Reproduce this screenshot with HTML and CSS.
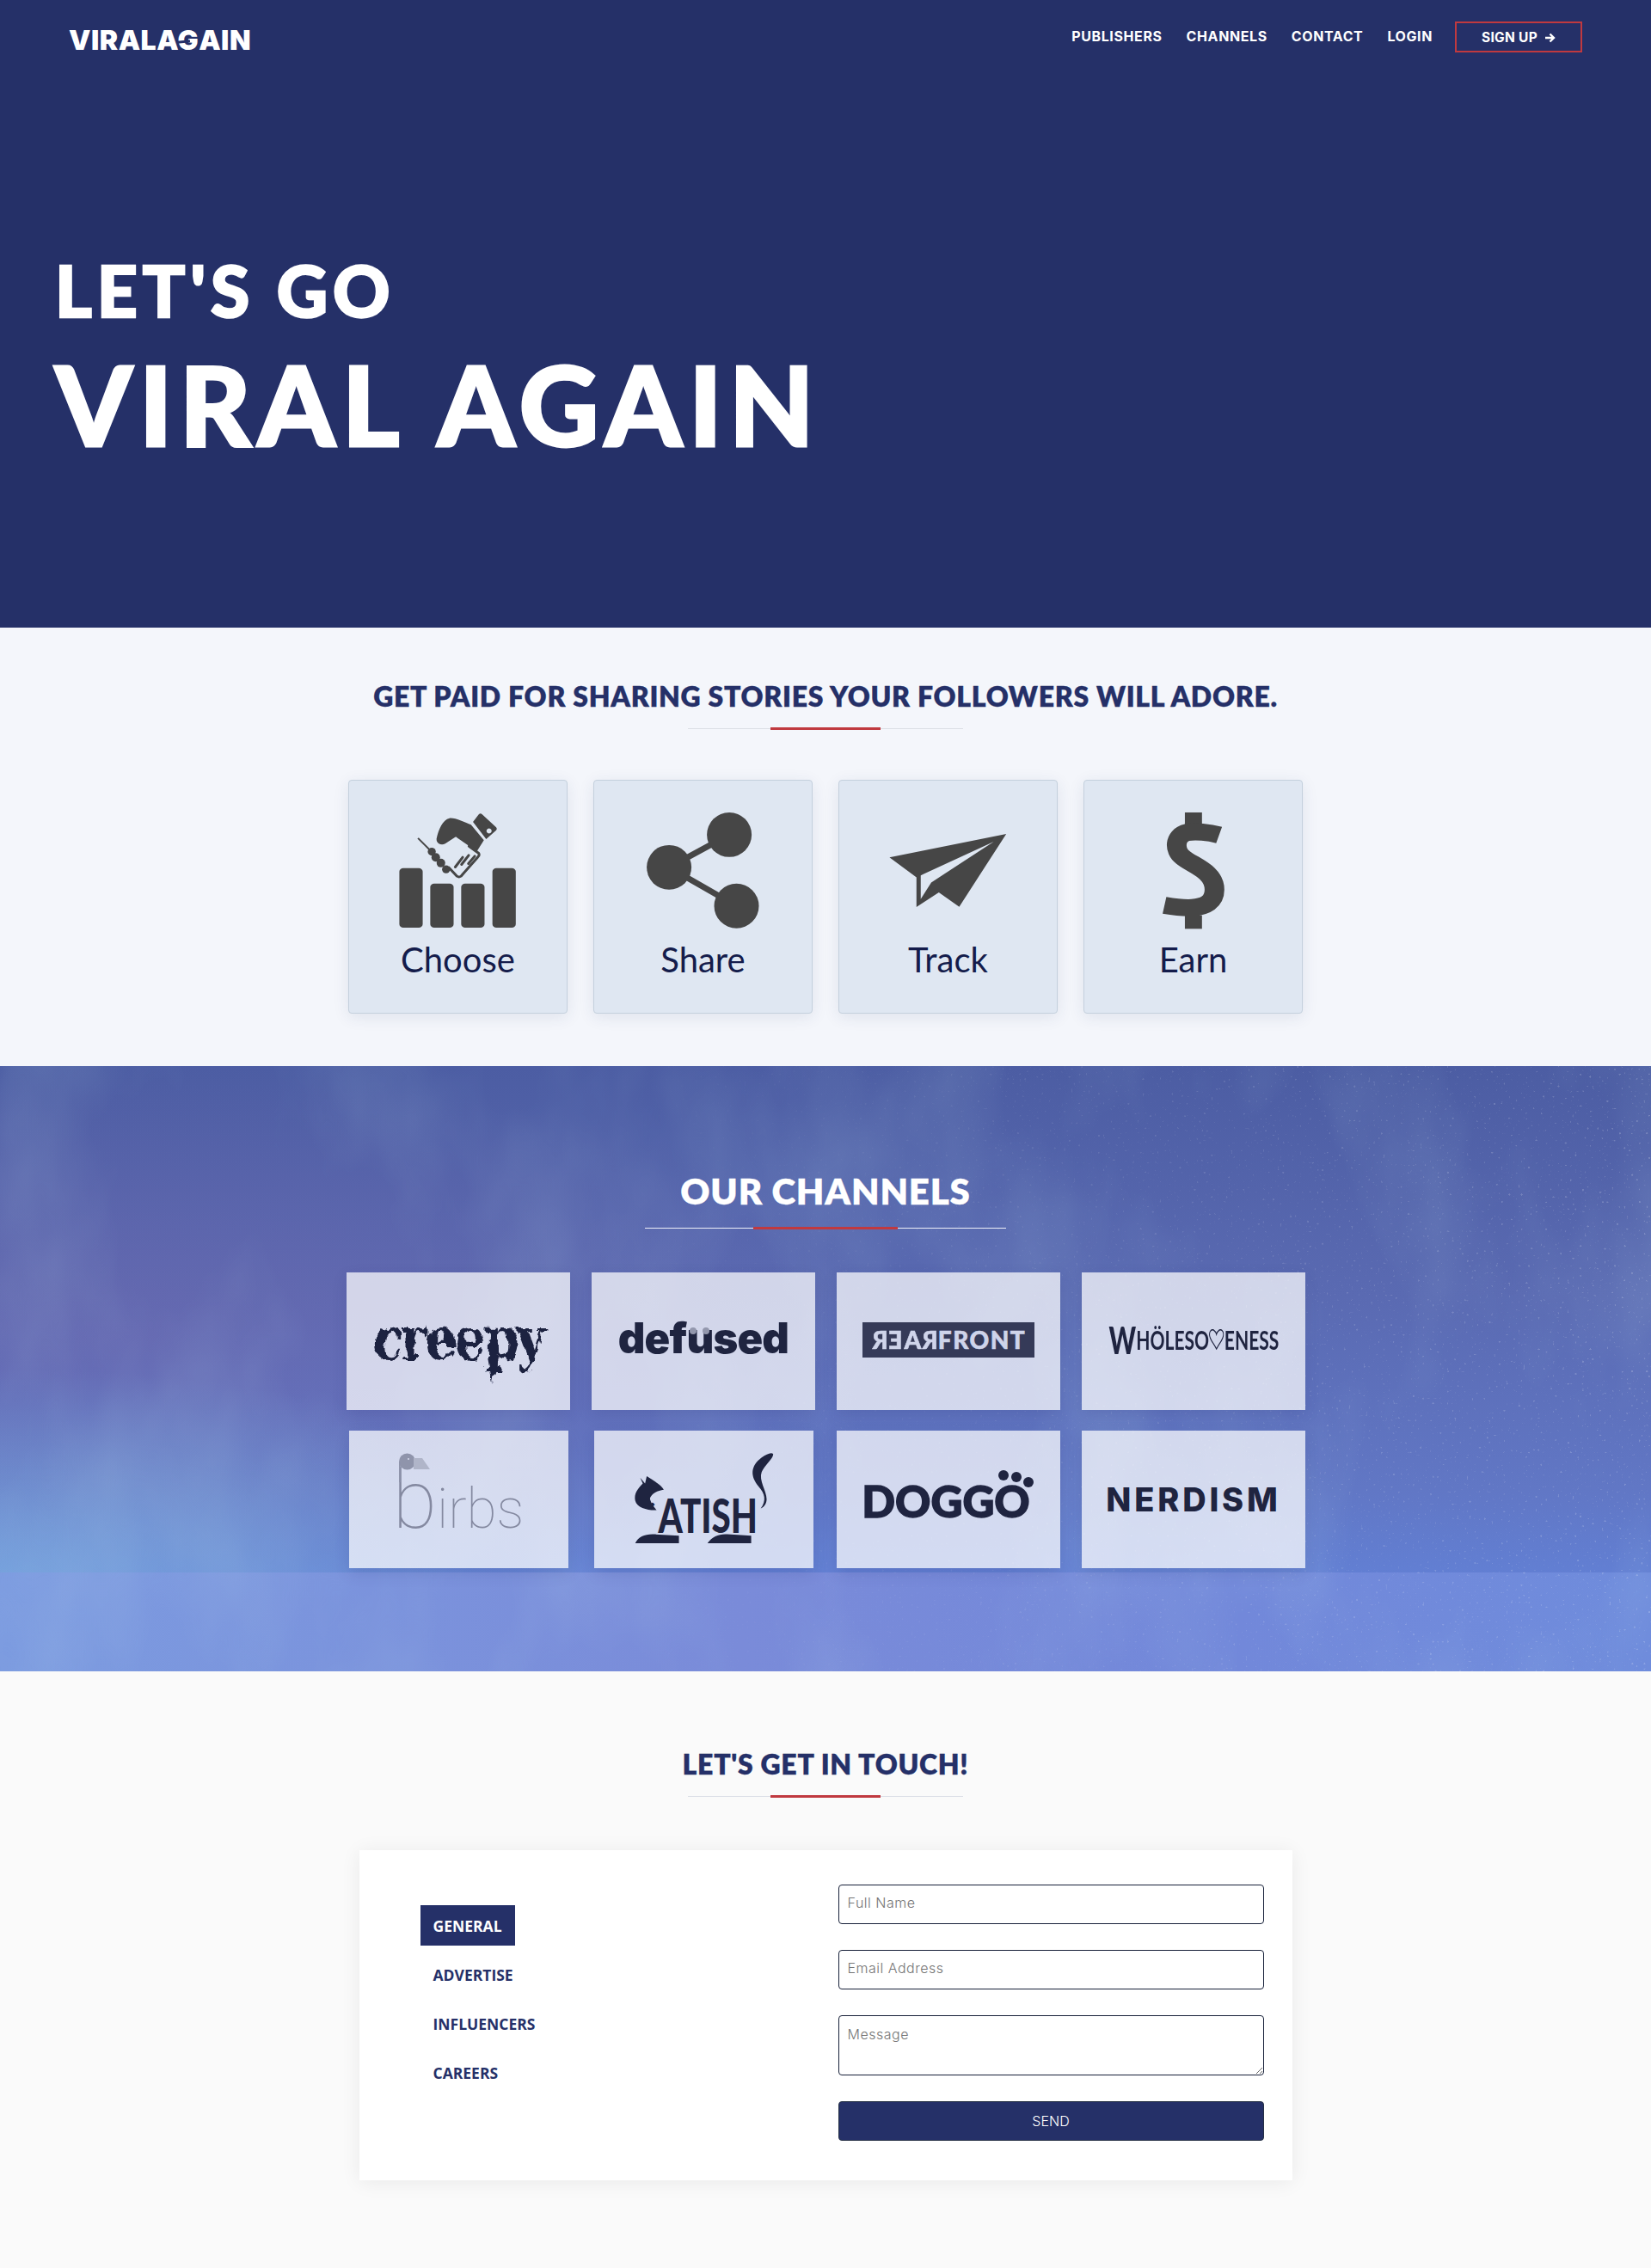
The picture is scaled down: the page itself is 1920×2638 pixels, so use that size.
FILE: index.html
```html
<!DOCTYPE html>
<html lang="en">
<head>
  <meta charset="utf-8">
  <title>Viral Again</title>
  <link rel="stylesheet" href="styles.css">
</head>
<body>
  <svg class="defs" width="0" height="0" aria-hidden="true">
    <filter id="rough" x="-5%" y="-5%" width="110%" height="110%">
      <feTurbulence type="fractalNoise" baseFrequency="0.09" numOctaves="3" seed="4"/>
      <feDisplacementMap in="SourceGraphic" scale="9"/>
    </filter>
  </svg>

  <section class="hero">
    <header class="topbar">
      <a class="brand">VIRALA<span class="brand-g">G</span>AIN</a>
      <nav class="nav">
        <a>PUBLISHERS</a>
        <a>CHANNELS</a>
        <a>CONTACT</a>
        <a>LOGIN</a>
        <a class="signup">SIGN UP
          <svg width="13" height="12" viewBox="0 0 13 12"><path d="M1 6h10M6.500 1.500 11 6l-4.500 4.500" fill="none" stroke="#fff" stroke-width="2.400"/></svg>
        </a>
      </nav>
    </header>
    <h1 class="hero-title">
      <span class="hero-small">LET'S GO</span>
      <span class="hero-big">VIRAL AGAIN</span>
    </h1>
  </section>

  <section class="steps">
    <h2 class="title">GET PAID FOR SHARING STORIES YOUR FOLLOWERS WILL ADORE.</h2>
    <div class="rule"></div>
    <div class="step-row">
      <div class="step">
        <svg class="step-icon" viewBox="200 540 400 430" preserveAspectRatio="none">
          <rect x="222" y="750" width="71" height="208" rx="12" ry="12"/>
          <rect x="316" y="804" width="71" height="154" rx="12" ry="12"/>
          <rect x="410" y="804" width="71" height="154" rx="12" ry="12"/>
          <rect x="505" y="750" width="71" height="208" rx="12" ry="12"/>
          <g transform="translate(261.300 540) scale(.871 1)">
            <path d="M85,105C90,80 105,40 130,35C150,33 185,50 205,58L250,112L225,152C205,137 172,114 152,100L115,124C100,132 82,122 85,105Z"/>
            <path fill-rule="evenodd" d="M232,22Q238,16 244,22L292,66Q298,72 292,78L258,108L212,48ZM268,71a9,9 0 1,0 .1,0Z"/>
            <path class="hand-line" d="M198,133L232,158Q236,165 228,172L170,238Q163,243 156,238L128,208"/>
            <path class="hand-line" d="M218,168L196,194M197,165L172,197M176,172L150,206"/>
            <path class="hand-rod" d="M20,105L70,155"/>
            <circle cx="68" cy="152" r="14"/><circle cx="82" cy="172" r="15"/><circle cx="100" cy="192" r="15"/><circle cx="118" cy="214" r="14"/>
          </g>
        </svg>
        <span class="step-label">Choose</span>
      </div>
      <div class="step">
        <svg class="step-icon" viewBox="943 540 400 430" preserveAspectRatio="none">
          <path class="link" d="M1223,633L1040,747L1245,882"/>
          <ellipse cx="1223" cy="633" rx="68" ry="78"/>
          <ellipse cx="1040" cy="747" rx="68" ry="78"/>
          <ellipse cx="1245" cy="882" rx="68" ry="78"/>
        </svg>
        <span class="step-label">Share</span>
      </div>
      <div class="step">
        <svg class="step-icon" viewBox="198 540 400 430" preserveAspectRatio="none">
          <path fill-rule="evenodd" d="M220,712L575,630L432,885L370,835L302,886L302,782ZM537,657L315,775L315,858L347,800Z"/>
        </svg>
        <span class="step-label">Track</span>
      </div>
      <div class="step">
        <svg class="step-icon" viewBox="943 540 400 430" preserveAspectRatio="none">
          <rect x="1118" y="555" width="52" height="50"/>
          <rect x="1118" y="915" width="52" height="47"/>
          <path class="dollar" d="M1222,634C1190,624 1150,620 1125,625C1085,635 1085,690 1112,712C1140,740 1208,760 1208,825C1208,868 1180,885 1140,888C1110,890 1082,885 1056,880"/>
        </svg>
        <span class="step-label">Earn</span>
      </div>
    </div>
  </section>

  <section class="channels">
    <svg class="nebula" width="1920" height="704" aria-hidden="true">
      <defs>
        <filter id="clouds" x="0" y="0" width="100%" height="100%">
          <feTurbulence type="fractalNoise" baseFrequency="0.006 0.003" numOctaves="4" seed="11"/>
          <feColorMatrix values="0 0 0 0 .5  0 0 0 0 .72  0 0 0 0 .85  2.400 0 0 0 -1.050"/>
        </filter>
        <filter id="stars" x="0" y="0" width="100%" height="100%">
          <feTurbulence type="fractalNoise" baseFrequency="0.35" numOctaves="1" seed="7"/>
          <feColorMatrix values="0 0 0 0 1  0 0 0 0 1  0 0 0 0 1  12 0 0 0 -8.100"/>
          <feGaussianBlur stdDeviation="0.600"/>
        </filter>
        <linearGradient id="starfade" x1="0" x2="1" y1="0" y2="0">
          <stop offset="0.35" stop-color="#000"/>
          <stop offset="1" stop-color="#fff"/>
        </linearGradient>
        <mask id="starmask"><rect width="1920" height="704" fill="url(#starfade)"/></mask>
      </defs>
      <rect width="1920" height="704" filter="url(#clouds)" opacity="0.14"/>
      <g mask="url(#starmask)"><rect width="1920" height="704" filter="url(#stars)" opacity="0.2"/></g>
    </svg>
    <div class="channels-body">
      <h2 class="title title-light">OUR CHANNELS</h2>
      <div class="rule rule-light"></div>
      <div class="tile-grid">
        <div class="tile"><span class="logo-creepy">creepy</span></div>
        <div class="tile"><span class="logo-defused">def<span class="dotted-u">u</span>sed</span></div>
        <div class="tile"><span class="logo-rear"><span class="mirror">R</span><span class="mirror">E</span><span class="mirror">A</span><span class="mirror">R</span>FRONT</span></div>
        <div class="tile"><span class="logo-whole"><b>W</b>HÖLESO<svg width="26" height="24" viewBox="0 0 26 24"><path d="M13,23C7,15 1,12 1,6C1,2 5,0 8,1C10,2 12,3 13,6C14,3 16,2 18,1C21,0 25,2 25,6C25,12 19,15 13,23Z" fill="none" stroke="#1f2440" stroke-width="1.500"/></svg>ENESS</span></div>
        <div class="tile tile-narrow">
          <span class="logo-birbs">
            <svg class="birb-head" width="40" height="34" viewBox="0 0 40 34">
              <circle cx="9.500" cy="10" r="9.500" fill="#8f94ab"/>
              <path d="M0,10V34H1.800V10Z" fill="#8f94ab"/>
              <path d="M17,6H27L36,19H17Z" fill="#b0b5c9"/>
              <circle cx="11" cy="7" r="1" fill="#d8dcee"/>
            </svg>
            <span class="birb-b">b</span>irbs
          </span>
        </div>
        <div class="tile tile-narrow">
          <svg class="logo-catish" viewBox="930 75 445 335" preserveAspectRatio="none">
            <text transform="translate(952 276) scale(.8 1)" class="cat-c">C</text>
            <path d="M960,170L975,190L980,165C1000,180 1025,195 1032,212C1010,215 990,230 990,245C995,265 1005,275 1010,283C985,285 950,275 945,250C940,225 955,205 968,190Z"/>
            <path d="M1327,277C1345,250 1340,225 1320,200C1295,165 1295,130 1330,100C1345,88 1360,80 1365,88C1365,105 1340,125 1330,150C1320,180 1345,215 1345,245C1345,262 1335,275 1327,277Z"/>
            <path d="M945,398C955,375 975,365 1005,367L1078,372V398ZM1165,398C1180,375 1200,365 1225,367L1298,372V398Z"/>
            <text transform="translate(1015 362) scale(.64 1)">ATISH</text>
          </svg>
        </div>
        <div class="tile">
          <span class="logo-doggo">DOGG<span class="paw-o">O</span></span>
        </div>
        <div class="tile"><span class="logo-nerdism">NERDISM</span></div>
      </div>
    </div>
  </section>

  <section class="contact">
    <h2 class="title">LET'S GET IN TOUCH!</h2>
    <div class="rule"></div>
    <div class="contact-card">
      <ul class="tabs">
        <li class="tab tab-active">GENERAL</li>
        <li class="tab">ADVERTISE</li>
        <li class="tab">INFLUENCERS</li>
        <li class="tab">CAREERS</li>
      </ul>
      <form class="contact-form">
        <input class="field" type="text" placeholder="Full Name">
        <input class="field" type="text" placeholder="Email Address">
        <textarea class="field field-area" placeholder="Message"></textarea>
        <button class="send" type="button">SEND</button>
      </form>
    </div>
  </section>
</body>
</html>
```

FILE: styles.css
```css
* { box-sizing: border-box; }
html, body { margin: 0; padding: 0; }
body { font-family: "Lato", "Open Sans", sans-serif; background: #fafafa; }
.defs { display: block; height: 0; }

/* hero */
.hero { height: 730px; background: #253068; color: #fff; }
.topbar { display: flex; justify-content: space-between; padding: 25px 80px 0; }
.brand { font-family: "Inter", sans-serif; font-weight: 900; font-size: 32px; line-height: 44px; letter-spacing: 0.5px; }
.brand-g { position: relative; }
.brand-g::after { content: ""; position: absolute; left: -1px; top: 20px; width: 15px; height: 3px; background: #253068; transform: rotate(-5deg); }
.nav { display: flex; align-items: flex-start; gap: 28px; font-family: "Inter", sans-serif; font-weight: 700; font-size: 16px; line-height: 34px; letter-spacing: 0.6px; }
.signup { display: flex; align-items: center; justify-content: center; gap: 8px; width: 148px; height: 36px; margin-left: -2px; border: 2px solid #c0393f; padding-top: 2px; line-height: 20px; font-size: 15.500px; letter-spacing: 0.3px; }
.hero-title { margin: 0; padding: 222px 0 0 64px; font-weight: 900; }
.hero-small { display: block; font-size: 82px; line-height: 92px; letter-spacing: 6px; -webkit-text-stroke: 2.500px #fff; }
.hero-big { display: block; font-size: 128px; line-height: 150px; margin-top: 12px; letter-spacing: 8px; word-spacing: 6px; -webkit-text-stroke: 3px #fff; }

/* section headings */
.title { margin: 0; text-align: center; color: #253068; font-weight: 800; font-size: 32px; line-height: 40px; letter-spacing: 0.7px; -webkit-text-stroke: 0.3px; }
.title-light { color: #fff; font-size: 42px; line-height: 50px; letter-spacing: 0.8px; }
.rule { width: 320px; height: 3px; margin: 16px auto 0; background: linear-gradient(#c0393f, #c0393f) center / 128px 3px no-repeat, linear-gradient(#dcdfe6, #dcdfe6) center / 100% 1px no-repeat; }
.rule-light { width: 420px; margin-top: 17px; background: linear-gradient(#c0393f, #c0393f) center / 168px 3px no-repeat, linear-gradient(#eef0f8, #eef0f8) center / 100% 1px no-repeat; }

/* how it works */
.steps { height: 510px; padding-top: 60px; background: #f4f6fb; }
.step-row { display: flex; justify-content: center; gap: 30px; margin-top: 58px; }
.step { display: flex; flex-direction: column; align-items: center; width: 255px; height: 272px; padding-top: 32px; background: #dfe7f2; border: 1px solid #c4d0dd; border-radius: 4px; box-shadow: 0 4px 18px rgba(40, 60, 110, 0.1); }
.step-icon { width: 153px; height: 143px; fill: #464646; }
.step-label { margin-top: 10px; font-size: 40px; line-height: 46px; color: #141c4b; }
.hand-line { fill: none; stroke: #464646; stroke-width: 9; stroke-linecap: round; stroke-linejoin: round; }
.hand-rod { fill: none; stroke: #464646; stroke-width: 6; }
.link { fill: none; stroke: #464646; stroke-width: 20; }
.dollar { fill: none; stroke: #464646; stroke-width: 60; }

/* channels */
.channels {
  position: relative;
  height: 704px;
  padding-top: 120px;
  background:
    linear-gradient(90deg, #7c9be0 0%, #7a8bd9 45%, #7288da 75%, #6f8cdc 100%) bottom / 100% 115px no-repeat,
    radial-gradient(700px 240px at 0% 84%, rgba(125, 175, 225, 0.7), transparent),
    radial-gradient(900px 320px at 8% 45%, rgba(125, 100, 170, 0.3), transparent),
    linear-gradient(180deg, #4c5da3 0%, #5a6ab2 38%, #6177c5 70%, #627fd3 84%);
}
.nebula { position: absolute; left: 0; top: 0; }
.channels-body { position: relative; }
.tile-grid { display: grid; grid-template-columns: repeat(4, 260px); justify-content: center; gap: 24px 25px; margin-top: 50px; padding-left: 1px; }
.tile { display: flex; align-items: center; justify-content: center; height: 160px; background: rgba(255, 255, 255, 0.72); box-shadow: 0 6px 16px rgba(40, 50, 110, 0.14); color: #1f2440; }
.tile-narrow { width: 255px; justify-self: center; }

.logo-creepy { position: relative; display: inline-block; font-family: "DejaVu Serif", serif; font-weight: 700; font-size: 58px; letter-spacing: -2.500px; line-height: 60px; filter: url(#rough); transform: scaleY(1.2); margin-bottom: 6px; }
.logo-creepy::after { content: ""; position: absolute; left: 133px; top: 46px; width: 14px; height: 28px; background: #1f2440; clip-path: polygon(0 0, 100% 0, 45% 100%); }
.logo-defused { font-family: "Inter", sans-serif; font-weight: 900; font-size: 49px; line-height: 60px; letter-spacing: -0.8px; margin-bottom: 6px; }
.dotted-u { position: relative; }
.dotted-u::before, .dotted-u::after { content: ""; position: absolute; top: 17px; width: 8px; height: 8px; border-radius: 50%; background: #9397ad; }
.dotted-u::before { left: 4px; }
.dotted-u::after { right: 4px; }
.logo-rear { display: flex; align-items: center; justify-content: center; width: 200px; height: 41px; margin-bottom: 4px; background: #353a58; color: #cfd4ea; font-weight: 900; font-size: 28px; letter-spacing: 1.500px; -webkit-text-stroke: 0.6px #cfd4ea; }
.mirror { display: inline-block; transform: scaleX(-1); }
.logo-whole { display: flex; align-items: center; transform: scaleX(0.68); white-space: nowrap; font-weight: 700; font-size: 31px; margin-bottom: 4px; }
.logo-whole b { font-size: 44px; }
.logo-birbs { position: relative; font-family: "Roboto", sans-serif; font-weight: 100; font-size: 64px; line-height: 1.2; color: #8489a0; margin-top: 4px; }
.birb-b { font-size: 94px; line-height: 1; }
.birb-head { position: absolute; left: 7px; top: -8px; }
.logo-catish { width: 170px; height: 112px; fill: #1f2440; margin-bottom: 2px; }
.logo-catish text { font-weight: 900; font-size: 165px; }
.logo-catish .cat-c { font-size: 100px; }
.logo-doggo { font-weight: 900; font-size: 51px; line-height: 50px; margin-top: 4px; margin-right: 6px; -webkit-text-stroke: 1.500px #1f2440; }
.paw-o { position: relative; }
.paw-o::after { content: ""; position: absolute; left: 20px; top: -3px; width: 12px; height: 12px; border-radius: 50%; background: #1f2440; box-shadow: -15px -2px 0 0 #1f2440, 14px 6px 0 0 #1f2440; }
.logo-nerdism { font-family: "Inter", sans-serif; font-weight: 800; font-size: 38px; letter-spacing: 3.800px; line-height: 46px; }

/* contact */
.contact { height: 694px; padding-top: 88px; }
.contact-card { display: flex; justify-content: space-between; width: 1085px; height: 384px; margin: 61px auto 0; padding: 40px 33px 0 71px; background: #fff; box-shadow: 0 2px 22px rgba(0, 0, 0, 0.07); }
.tabs { list-style: none; margin: 24px 0 0; padding: 0; display: flex; flex-direction: column; align-items: flex-start; gap: 10px; }
.tab { height: 47px; padding: 0 15px; font-family: "Open Sans", sans-serif; font-weight: 700; font-size: 17.500px; line-height: 49px; color: #253068; }
.tab-active { background: #253068; color: #fff; }
.contact-form { display: flex; flex-direction: column; gap: 30px; width: 495px; }
.field { display: block; width: 100%; height: 46px; padding: 0 10px 4px; border: 1px solid #18213a; border-radius: 4px; font-family: "Inter", sans-serif; font-size: 16px; font-weight: 300; letter-spacing: 0.5px; background: #fff; }
.field-area { height: 70px; padding-top: 11px; }
.send { height: 46px; border: 1px solid #253045; border-radius: 4px; background: #253068; color: #fff; font-family: "Inter", sans-serif; font-size: 16px; font-weight: 300; }
```
